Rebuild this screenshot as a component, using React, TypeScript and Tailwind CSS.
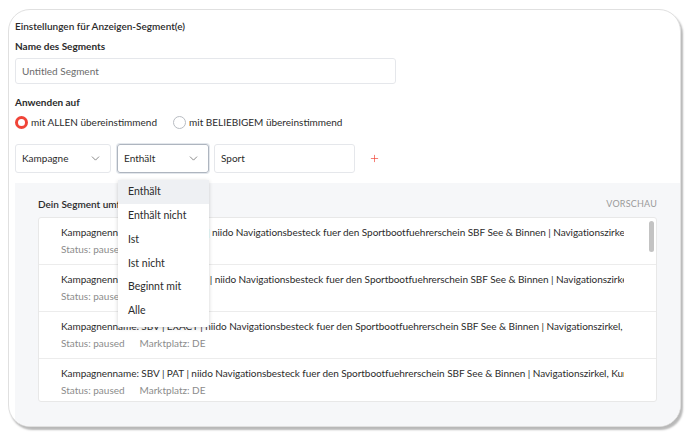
import { ChevronDown, Plus } from "lucide-react";

const rows = [
  "Kampagnenname: SBV | PHRASE | niido Navigationsbesteck fuer den Sportbootfuehrerschein SBF See & Binnen | Navigationszirkel, Kurs",
  "Kampagnenname: SBV | BROAD+ | niido Navigationsbesteck fuer den Sportbootfuehrerschein SBF See & Binnen | Navigationszirkel, Kurs",
  "Kampagnenname: SBV | EXACT | niido Navigationsbesteck fuer den Sportbootfuehrerschein SBF See & Binnen | Navigationszirkel, Kurs",
  "Kampagnenname: SBV | PAT | niido Navigationsbesteck fuer den Sportbootfuehrerschein SBF See & Binnen | Navigationszirkel, Kurs",
];

const options = ["Enthält", "Enthält nicht", "Ist", "Ist nicht", "Beginnt mit", "Alle"];

export default function App() {
  return (
    <div className="w-[688px] h-[434px] bg-white pl-[8px] pt-[9px] font-['Lato',sans-serif] text-[#2b2b2b]">
      <div className="relative w-[673px] h-[418px] rounded-[22px] border border-[#e0e0e0] bg-white shadow-[2px_3px_2px_rgba(0,0,0,0.28)] overflow-hidden flex flex-col">
        {/* Settings */}
        <div className="pl-[6px] pt-[9px]">
          <p className="text-[10px] leading-[14px] font-semibold">Einstellungen für Anzeigen-Segment(e)</p>
          <p className="mt-[6px] text-[10px] leading-[14px] font-bold">Name des Segments</p>
          <div className="mt-[5px] w-[381px] h-[26px] rounded-[3px] border border-[#e5e7eb] flex items-center px-[6px] text-[10px] text-[#6b6b6b]">
            Untitled Segment
          </div>
          <p className="mt-[11px] text-[10px] leading-[14px] font-bold">Anwenden auf</p>
          <div className="mt-[6px] flex items-center text-[10px] leading-[14px]">
            <span className="w-[13px] h-[13px] rounded-full border-[3px] border-[#f04438]" />
            <span className="ml-[3px]">mit ALLEN übereinstimmend</span>
            <span className="ml-[16px] w-[13px] h-[13px] rounded-full border border-[#b8bcc2]" />
            <span className="ml-[3px]">mit BELIEBIGEM übereinstimmend</span>
          </div>

          {/* Filter row */}
          <div className="mt-[15px] flex items-center text-[10px]">
            <div className="w-[96px] h-[29px] rounded-[3px] border border-[#e5e7eb] flex items-center justify-between pl-[6px] pr-[8px]">
              <span>Kampagne</span>
              <ChevronDown className="w-[13px] h-[13px] text-[#666]" strokeWidth={1.4} />
            </div>
            <div className="ml-[6px] w-[92px] h-[29px] rounded-[3px] border-[1.5px] border-[#aeb5bf] shadow-[0_0_0_1px_#e3e7ec] flex items-center justify-between pl-[6px] pr-[8px]">
              <span>Enthält</span>
              <ChevronDown className="w-[13px] h-[13px] text-[#666]" strokeWidth={1.4} />
            </div>
            <div className="ml-[5px] w-[141px] h-[29px] rounded-[3px] border border-[#e5e7eb] flex items-center px-[6px]">
              Sport
            </div>
            <Plus className="ml-[14px] w-[11px] h-[11px] text-[#f04438]" strokeWidth={1.5} />
          </div>
        </div>

        {/* Preview panel */}
        <div className="mt-[10px] ml-[6px] flex-1 bg-[#f6f7f9] px-[23px] pt-[14px]">
          <div className="flex items-center justify-between text-[10px] leading-[14px]">
            <span className="font-semibold">Dein Segment umfasst 4 Kampagnen</span>
            <span className="text-[9px] text-[#9a9a9a] tracking-[0.2px]">VORSCHAU</span>
          </div>
          <div className="relative mt-[6px] h-[185px] rounded-[3px] border border-[#e8e8e8] bg-white overflow-hidden">
            {rows.map((r, i) => (
              <div key={i} className="h-[47px] border-b border-[#ececec] pl-[22px] pr-[32px] pt-[7px]">
                <p className="text-[10px] leading-[14px] tracking-[-0.05px] whitespace-nowrap overflow-hidden">{r}</p>
                <p className="mt-[3px] text-[10px] leading-[14px] text-[#8c8c8c] whitespace-nowrap">
                  Status: paused<span className="ml-[15px]">Marktplatz: DE</span>
                </p>
              </div>
            ))}
            <div className="absolute right-[2px] top-[3px] w-[5px] h-[31px] rounded-full bg-[#c3c3c3]" />
          </div>
        </div>

        {/* Open dropdown */}
        <div className="absolute left-[109px] top-[170px] w-[91px] bg-white shadow-[0_1px_4px_rgba(0,0,0,0.18)] rounded-[2px] pb-[4px] text-[10.5px]">
          {options.map((o, i) => (
            <div
              key={o}
              className={
                i === 0
                  ? "h-[24px] flex items-center pl-[10px] bg-[#eef0f3]"
                  : "h-[23.8px] flex items-center pl-[10px]"
              }
            >
              {o}
            </div>
          ))}
        </div>
      </div>
    </div>
  );
}
